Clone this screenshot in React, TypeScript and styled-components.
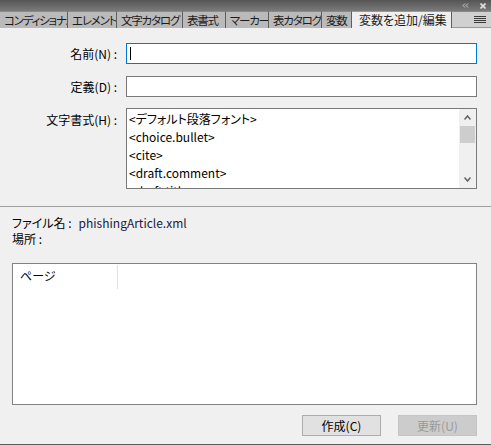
import React from "react";
import styled, { createGlobalStyle } from "styled-components";

const GlobalStyle = createGlobalStyle`
  html, body {
    margin: 0;
    padding: 0;
    background: #f0f0f0;
  }
  body {
    font-family: "Noto Sans CJK JP", "Noto Sans", sans-serif;
    font-size: 12px;
    font-feature-settings: "palt";
    color: #000;
  }
`;

const tabs = [
  { label: "コンディショナル", width: 68 },
  { label: "エレメント", width: 49 },
  { label: "文字カタログ", width: 66 },
  { label: "表書式", width: 43 },
  { label: "マーカー", width: 43 },
  { label: "表カタログ", width: 53 },
  { label: "変数", width: 30 },
  { label: "変数を追加/編集", width: 100, active: true },
];

const styles = [
  "<デフォルト段落フォント>",
  "<choice.bullet>",
  "<cite>",
  "<draft.comment>",
  "<draft.title>",
];

const Panel = styled.div`
  width: 491px;
  height: 445px;
  display: flex;
  flex-direction: column;
  background: #f0f0f0;
  border-bottom: 1px solid #5c5c5c;
  box-sizing: border-box;
  overflow: hidden;
`;

const TitleBar = styled.div`
  height: 11px;
  background: linear-gradient(#555555, #7a7a7a);
  display: flex;
  justify-content: flex-end;
  align-items: center;
  gap: 11px;
  padding-right: 5px;
`;

const TabRow = styled.div`
  height: 17px;
  display: flex;
  background: #b8b8b8;
`;

const Tab = styled.div<{ $width: number; $active?: boolean }>`
  width: ${({ $width }) => $width}px;
  flex: none;
  box-sizing: border-box;
  border-right: 1px solid #5e5e5e;
  border-top: 1px solid ${({ $active }) => ($active ? "#9a9a9a" : "#8a8a8a")};
  background: ${({ $active }) => ($active ? "#efefef" : "#bababa")};
  color: #1c1c1c;
  font-size: ${({ $active }) => ($active ? "12px" : "11.5px")};
  letter-spacing: ${({ $active }) => ($active ? "0" : "-1.2px")};
  line-height: 16px;
  padding-left: ${({ $active }) => ($active ? "7px" : "4px")};
  white-space: nowrap;
  overflow: hidden;
`;

const MenuTab = styled.div`
  flex: 1;
  background: #d0d0d0;
  border-top: 1px solid #8a8a8a;
  border-bottom: 1px solid #9a9a9a;
  display: flex;
  align-items: center;
  justify-content: flex-end;
  padding-right: 5px;
`;

const Form = styled.div`
  display: grid;
  grid-template-columns: 117px 351px;
  column-gap: 9px;
  row-gap: 12px;
  margin-top: 15px;
`;

const Label = styled.div<{ $top?: boolean }>`
  text-align: right;
  align-self: ${({ $top }) => ($top ? "start" : "center")};
  padding-top: ${({ $top }) => ($top ? "3px" : "0")};
  line-height: 16px;
  white-space: nowrap;
`;

const Input = styled.div<{ $focused?: boolean }>`
  height: 21px;
  box-sizing: border-box;
  background: #fff;
  border: 1px solid ${({ $focused }) => ($focused ? "#0078d7" : "#7a7a7a")};
  position: relative;
`;

const Caret = styled.span`
  position: absolute;
  left: 3px;
  top: 3px;
  width: 1px;
  height: 13px;
  background: #000;
`;

const ListBox = styled.div`
  height: 81px;
  margin-top: -1px;
  box-sizing: border-box;
  border: 1px solid #7a7a7a;
  background: #fff;
  display: flex;
  overflow: hidden;
`;

const Items = styled.div`
  flex: 1;
  padding-top: 1px;
`;

const Item = styled.div`
  height: 18px;
  line-height: 18px;
  padding-left: 2px;
  white-space: nowrap;
`;

const ScrollBar = styled.div`
  width: 17px;
  background: #f0f0f0;
  display: flex;
  flex-direction: column;
  align-items: center;
`;

const ScrollArrow = styled.div`
  height: 17px;
  display: flex;
  align-items: center;
  justify-content: center;
`;

const Thumb = styled.div`
  width: 15px;
  height: 17px;
  background: #cdcdcd;
`;

const Spacer = styled.div`
  flex: 1;
`;

const Separator = styled.div`
  margin-top: 17px;
  border-top: 1px solid #a0a0a0;
`;

const Info = styled.div`
  display: grid;
  grid-template-columns: auto 1fr;
  column-gap: 7px;
  padding: 8px 12px 0;
  line-height: 16px;
  white-space: nowrap;
`;

const Value = styled.span`
  color: #1a1a40;
`;

const Table = styled.div`
  margin: 16px 14px 0 12px;
  height: 142px;
  box-sizing: border-box;
  border: 1px solid #828282;
  background: #fff;
`;

const TableHead = styled.div`
  display: flex;
  height: 24px;
  margin-top: 1px;
`;

const HeadCell = styled.div`
  width: 97px;
  padding-left: 7px;
  line-height: 22px;
  border-right: 1px solid #e3e3e3;
`;

const Buttons = styled.div`
  display: flex;
  justify-content: flex-end;
  gap: 17px;
  margin: 10px 14px 0 0;
`;

const Button = styled.div<{ $disabled?: boolean }>`
  width: 79px;
  height: 21px;
  box-sizing: border-box;
  border: 1px solid ${({ $disabled }) => ($disabled ? "#c4c4c4" : "#adadad")};
  background: ${({ $disabled }) => ($disabled ? "#cccccc" : "#e1e1e1")};
  color: ${({ $disabled }) => ($disabled ? "#9a9a9a" : "#000")};
  text-align: center;
  line-height: 19px;
`;

const Chevron = ({ up }: { up?: boolean }) => (
  <svg width="7" height="5" viewBox="0 0 7 5">
    <path
      d={up ? "M0.5 4.5 L3.5 1 L6.5 4.5" : "M0.5 0.5 L3.5 4 L6.5 0.5"}
      fill="none"
      stroke="#606060"
      strokeWidth="1.5"
    />
  </svg>
);

export default function App() {
  return (
    <>
      <GlobalStyle />
      <Panel>
        <TitleBar>
          <svg width="7" height="5" viewBox="0 0 7 5">
            <path d="M3 0.5 L1 2.5 L3 4.5 M6 0.5 L4 2.5 L6 4.5" fill="none" stroke="#c8c8c8" />
          </svg>
          <svg width="6" height="6" viewBox="0 0 6 6">
            <path d="M0.5 0.5 L5.5 5.5 M5.5 0.5 L0.5 5.5" fill="none" stroke="#e0e0e0" strokeWidth="1.6" />
          </svg>
        </TitleBar>
        <TabRow>
          {tabs.map((t) => (
            <Tab key={t.label} $width={t.width} $active={t.active}>
              {t.label}
            </Tab>
          ))}
          <MenuTab>
            <svg width="12" height="8" viewBox="0 0 12 8">
              <path d="M0 0.5 H12 M0 2.5 H12 M0 4.5 H12 M0 6.5 H12" stroke="#3a3a3a" />
            </svg>
          </MenuTab>
        </TabRow>
        <Form>
          <Label>名前(N) :</Label>
          <Input $focused>
            <Caret />
          </Input>
          <Label>定義(D) :</Label>
          <Input />
          <Label $top>文字書式(H) :</Label>
          <ListBox>
            <Items>
              {styles.map((s) => (
                <Item key={s}>{s}</Item>
              ))}
            </Items>
            <ScrollBar>
              <ScrollArrow>
                <Chevron up />
              </ScrollArrow>
              <Thumb />
              <Spacer />
              <ScrollArrow>
                <Chevron />
              </ScrollArrow>
            </ScrollBar>
          </ListBox>
        </Form>
        <Separator />
        <Info>
          <span>ファイル名 :</span>
          <Value>phishingArticle.xml</Value>
          <span>場所 :</span>
          <span />
        </Info>
        <Table>
          <TableHead>
            <HeadCell>ページ</HeadCell>
          </TableHead>
        </Table>
        <Buttons>
          <Button>作成(C)</Button>
          <Button $disabled>更新(U)</Button>
        </Buttons>
      </Panel>
    </>
  );
}
